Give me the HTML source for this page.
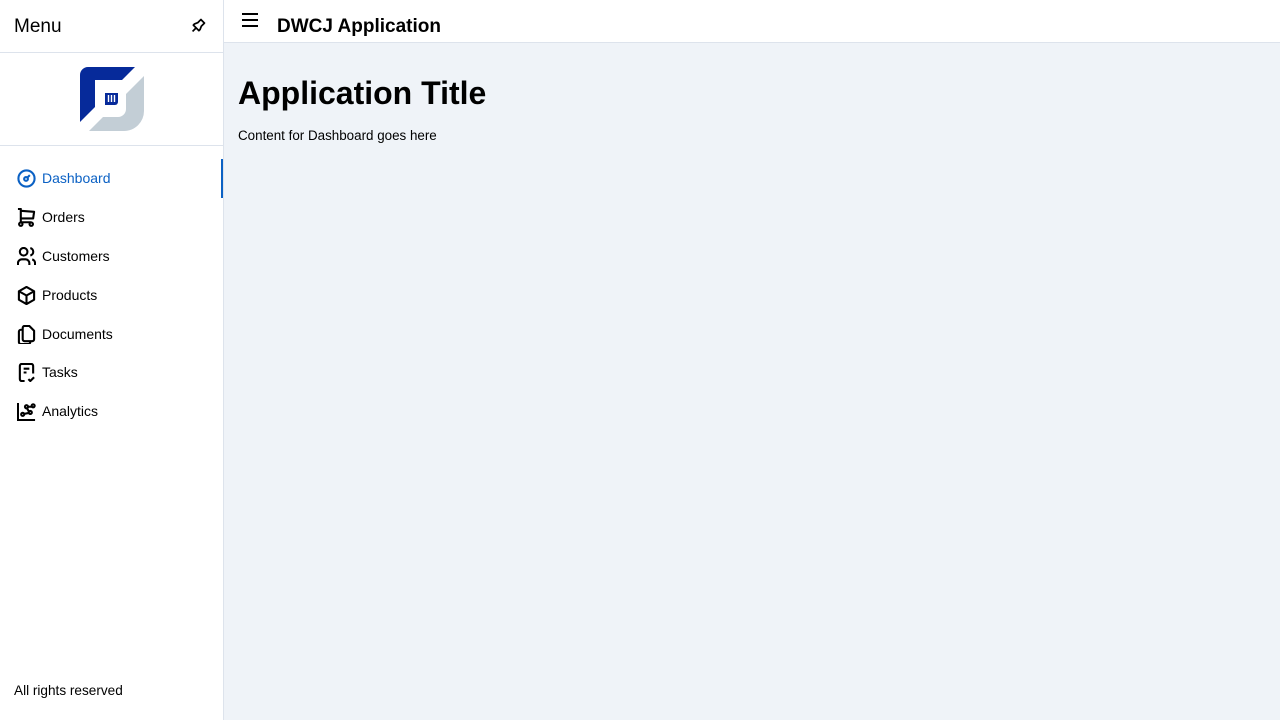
<!DOCTYPE html>
<html><head><style>
body{margin:0;width:1280px;height:720px;background:#eff3f8;font-family:"Liberation Sans",sans-serif;position:relative;overflow:hidden;color:#000}
.side{position:absolute;left:0;top:0;width:223px;height:720px;background:#fff;border-right:1px solid #dde3ec}
.mh{height:52px;border-bottom:1px solid #dde3ec;position:relative}
.mh span{position:absolute;left:14px;top:16px;font-size:19px}
.logo{height:92px;border-bottom:1px solid #dde3ec;position:relative}
.item{position:absolute;left:0;width:223px;height:39px;font-size:14px}
.item svg{position:absolute;left:17px;top:10px}
.item span{position:absolute;left:42px;top:11px}
.top{position:absolute;left:224px;top:0;right:0;height:42px;background:#fff;border-bottom:1px solid #dde3ec}
</style></head><body>
<div class="side">
<div class="mh"><span>Menu</span>
<svg style="position:absolute;left:189px;top:16px" width="19" height="19" viewBox="0 0 24 24" fill="none" stroke="#000" stroke-width="2.2" stroke-linejoin="round"><path d="M15 4.5l-4 4-4 1.5-1.5 1.5 7 7 1.5-1.5 1.5-4 4-4z M9 15l-4.5 4.5 M14.5 4l5.5 5.5"/></svg></div>
<div class="logo">
<svg style="position:absolute;left:80px;top:14px" width="64" height="64" viewBox="0 0 64 64">
<path d="M8 0H55L42 13H15V40L0 55V8A8 8 0 0 1 8 0Z" fill="#062a9a"/>
<path d="M64 9V44A20 20 0 0 1 44 64H9L23 50H38A8 8 0 0 0 46 42V27Z" fill="#c3ced6"/>
<path d="M25 26h13v9a3 3 0 0 1-3 3H25z" fill="#062a9a"/>
<path d="M28.5 28v7M31.5 28v7M34.5 28v7" stroke="#fff" stroke-width="1.4"/>
</svg></div>
<div class="item" style="top:159px;color:#0b61c4;border-right:2px solid #0b61c4;width:221px">
<svg width="19" height="19" viewBox="2 2 20 20" fill="none" stroke="#0b61c4" stroke-width="2.2"><circle cx="12" cy="12" r="8.5"/><circle cx="11.5" cy="12.5" r="2"/><path d="M13 11l2.5-2.5"/></svg><span>Dashboard</span></div>
<div class="item" style="top:198px"><svg width="19" height="19" viewBox="2 2 20 20" fill="none" stroke="#000" stroke-width="2.2" stroke-linejoin="round"><circle cx="6" cy="19" r="1.8"/><circle cx="17" cy="19" r="1.8"/><path d="M17 17H6V3H3M6 5l14 1-1 7H6"/></svg><span>Orders</span></div>
<div class="item" style="top:237px"><svg width="19" height="19" viewBox="2 2 20 20" fill="none" stroke="#000" stroke-width="2.2"><circle cx="9" cy="7" r="4"/><path d="M3 21v-2a4 4 0 0 1 4-4h4a4 4 0 0 1 4 4v2M16 3.1a4 4 0 0 1 0 7.8M21 21v-2a4 4 0 0 0-3-3.9"/></svg><span>Customers</span></div>
<div class="item" style="top:276px"><svg width="19" height="19" viewBox="2 2 20 20" fill="none" stroke="#000" stroke-width="2.2" stroke-linejoin="round"><path d="M12 3l8 4.5v9L12 21l-8-4.5v-9z M12 12l8-4.5M12 12v9M12 12L4 7.5"/></svg><span>Products</span></div>
<div class="item" style="top:315px"><svg width="19" height="19" viewBox="2 2 20 20" fill="none" stroke="#000" stroke-width="2.2" stroke-linejoin="round"><path d="M15 3H10a2 2 0 0 0-2 2v12a2 2 0 0 0 2 2h8a2 2 0 0 0 2-2V8z"/><path d="M16 19v1a2 2 0 0 1-2 2H6a2 2 0 0 1-2-2V9a2 2 0 0 1 2-2h2"/></svg><span>Documents</span></div>
<div class="item" style="top:353px"><svg width="19" height="19" viewBox="2 2 20 20" fill="none" stroke="#000" stroke-width="2.2"><path d="M10 21H7a2 2 0 0 1-2-2V5a2 2 0 0 1 2-2h10a2 2 0 0 1 2 2v8M9 8h6M9 12h3M14 19l2 2 4-4"/></svg><span>Tasks</span></div>
<div class="item" style="top:392px"><svg width="19" height="19" viewBox="2 2 20 20" fill="none" stroke="#000" stroke-width="2.2"><path d="M3 3v18h18"/><circle cx="8" cy="15" r="1.6"/><circle cx="16" cy="13" r="1.6"/><circle cx="12" cy="7" r="1.6"/><circle cx="19" cy="6" r="1.6"/><path d="M9.5 14.5l5-1M14.5 12l-2-3.5M13.5 7h4"/></svg><span>Analytics</span></div>
<div style="position:absolute;left:14px;top:683px;font-size:13.6px">All rights reserved</div>
</div>
<div class="top">
<svg style="position:absolute;left:17px;top:13px" width="18" height="14" viewBox="0 0 18 14" stroke="#000" stroke-width="2"><path d="M1 1h16M1 7h16M1 13h16"/></svg>
<div style="position:absolute;left:53px;top:16px;font-size:19px;font-weight:bold">DWCJ Application</div>
</div>
<div style="position:absolute;left:238px;top:75px;font-size:32px;font-weight:bold">Application Title</div>
<div style="position:absolute;left:238px;top:128px;font-size:13.4px">Content for Dashboard goes here</div>
</body></html>
